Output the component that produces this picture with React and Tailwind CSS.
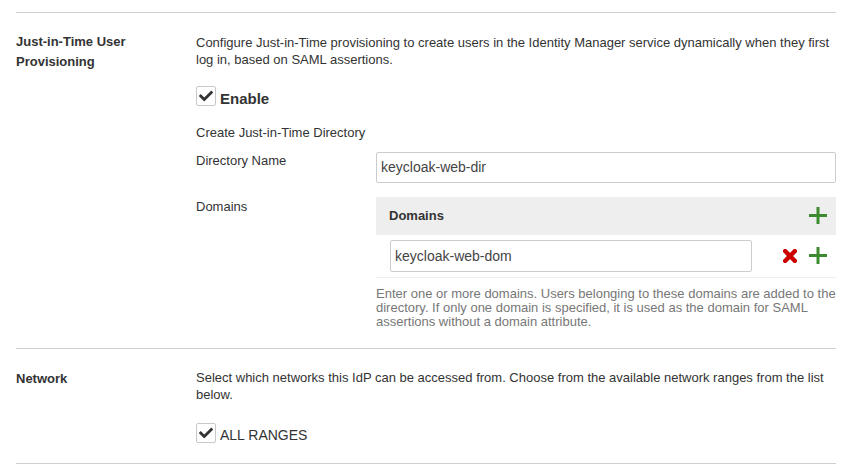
import { FaCheck } from 'react-icons/fa';

const font = { fontFamily: '"Liberation Sans", Arial, sans-serif' };

function Plus() {
  return (
    <svg width="18" height="17" viewBox="0 0 18 17" className="block">
      <rect x="7.5" y="0" width="3" height="17" fill="#3d8b2f" />
      <rect x="0" y="7" width="18" height="3" fill="#3d8b2f" />
    </svg>
  );
}

function Cross() {
  return (
    <svg width="14" height="14" viewBox="0 0 14 14" className="block">
      <g fill="#cc0000" transform="rotate(45 7 7)">
        <rect x="4.8" y="-2" width="4.4" height="18" rx="1" />
        <rect x="-2" y="4.8" width="18" height="4.4" rx="1" />
      </g>
    </svg>
  );
}

function Check({ children, bold }) {
  return (
    <div className="flex h-5 items-start gap-1">
      <span className="flex h-5 w-5 shrink-0 items-center justify-center rounded-[2px] border border-[#c8c8c8] bg-white">
        <FaCheck className="h-[14px] w-[14px] text-[#333]" />
      </span>
      <span
        className={
          bold
            ? 'mt-[3px] text-[15px] leading-5 font-bold text-[#333]'
            : 'mt-[2px] text-[14px] leading-5 text-[#333]'
        }
      >
        {children}
      </span>
    </div>
  );
}

export default function App() {
  return (
    <div className="bg-white px-4 pt-3 text-[13px] text-[#333]" style={font}>
      <div className="flex border-t border-[#cfcfcf] pt-[19px] pb-[19px]">
        <div className="w-[180px] shrink-0 font-bold leading-5">Just-in-Time User Provisioning</div>
        <div className="flex-1">
          <p className="pt-[1.5px] leading-[17px]">
            Configure Just-in-Time provisioning to create users in the Identity Manager service dynamically when they first log in, based on SAML assertions.
          </p>
          <div className="mt-[18px]">
            <Check bold>Enable</Check>
          </div>
          <div className="mt-[18px] leading-[17px]">Create Just-in-Time Directory</div>
          <div className="mt-[11px] flex">
            <div className="w-[180px] shrink-0 leading-[17px]">Directory Name</div>
            <input
              readOnly
              value="keycloak-web-dir"
              className="h-[31px] flex-1 rounded-[2px] border border-[#ccc] px-[4px] text-[14px] text-[#444] outline-none"
            />
          </div>
          <div className="mt-[14px] flex">
            <div className="w-[180px] shrink-0 pt-[1.5px] leading-[17px]">Domains</div>
            <div className="flex-1">
              <div className="flex h-[38px] items-center justify-between bg-[#eeeeee] pl-[13px] pr-[9px]">
                <span className="font-bold">Domains</span>
                <Plus />
              </div>
              <div className="flex items-center border-b border-[#eee] py-[5px] pl-[14px] pr-[9px]">
                <input
                  readOnly
                  value="keycloak-web-dom"
                  className="h-[32px] w-[362px] rounded-[2px] border border-[#ccc] px-[4px] text-[14px] text-[#444] outline-none"
                />
                <div className="ml-auto flex items-center gap-[12px]">
                  <Cross />
                  <Plus />
                </div>
              </div>
              <p className="mt-[9px] text-[13px] leading-[14px] text-[#777]">
                Enter one or more domains. Users belonging to these domains are added to the directory. If only one domain is specified, it is used as the domain for SAML assertions without a domain attribute.
              </p>
            </div>
          </div>
        </div>
      </div>
      <div className="flex border-t border-b border-[#cfcfcf] pt-[20px] pb-[20px]">
        <div className="w-[180px] shrink-0 font-bold leading-5">Network</div>
        <div className="flex-1">
          <p className="leading-[17.5px]">
            Select which networks this IdP can be accessed from. Choose from the available network ranges from the list below.
          </p>
          <div className="mt-[19px]">
            <Check>ALL RANGES</Check>
          </div>
        </div>
      </div>
    </div>
  );
}
